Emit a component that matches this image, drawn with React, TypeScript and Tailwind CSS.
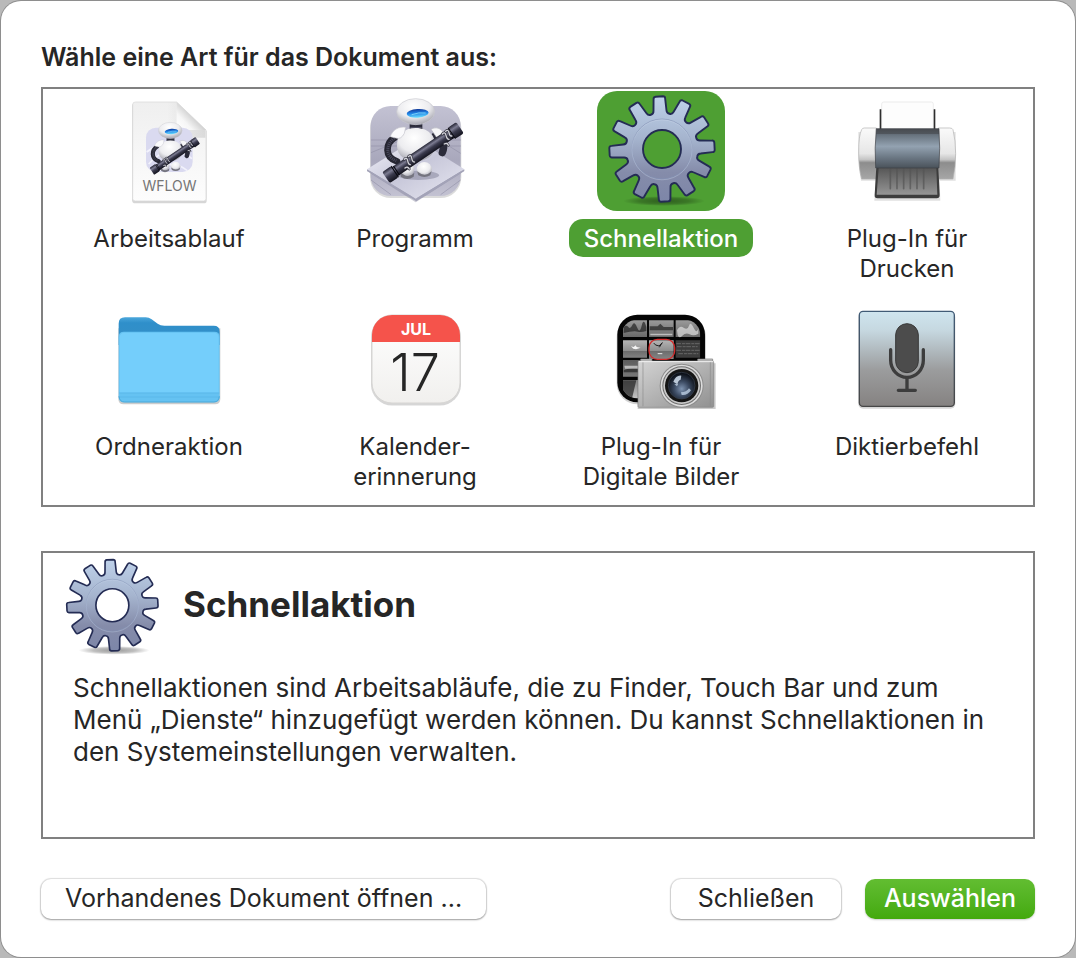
import type { ReactNode } from "react";

function gearPath(cx: number, cy: number) {
  const polar = (r: number, deg: number) => {
    const a = ((deg - 90) * Math.PI) / 180;
    return `${(cx + r * Math.cos(a)).toFixed(2)} ${(cy + r * Math.sin(a)).toFixed(2)}`;
  };
  let d = "";
  for (let i = 0; i < 12; i++) {
    const t = -3 + i * 30;
    d += `${i === 0 ? "M" : "L"}${polar(39, t - 9.6)}`;
    d += `L${polar(50.5, t - 6.6)}Q${polar(52.7, t - 6.4)} ${polar(52.7, t - 4)}`;
    d += `L${polar(52.7, t + 4)}Q${polar(52.7, t + 6.4)} ${polar(50.5, t + 6.6)}`;
    d += `L${polar(39, t + 9.6)}Q${polar(36, t + 10.5)} ${polar(36, t + 15)}`;
    d += `Q${polar(36, t + 19.5)} ${polar(39, t + 20.4)}`;
  }
  return d + "Z";
}

const GEAR = gearPath(65, 58);

function Gear({ id, className }: { id: string; className: string }) {
  return (
    <svg viewBox="0 0 128 120" className={className} aria-hidden="true">
      <defs>
        <linearGradient id={`${id}-body`} x1="0" y1="0" x2="0" y2="1">
          <stop offset="0" stopColor="#bfd2ea" />
          <stop offset=".4" stopColor="#a5b4ce" />
          <stop offset=".72" stopColor="#858caa" />
          <stop offset="1" stopColor="#7d86a8" />
        </linearGradient>
        <radialGradient id={`${id}-shadow`}>
          <stop offset="0" stopColor="#000" stopOpacity=".4" />
          <stop offset=".6" stopColor="#000" stopOpacity=".25" />
          <stop offset="1" stopColor="#000" stopOpacity="0" />
        </radialGradient>
      </defs>
      <ellipse cx="67" cy="110" rx="41" ry="5" fill={`url(#${id}-shadow)`} />
      <path
        d={`${GEAR}M84 58a19 19 0 1 0-38 0a19 19 0 1 0 38 0Z`}
        fill={`url(#${id}-body)`}
        fillRule="evenodd"
        stroke="#242c54"
        strokeWidth="1.9"
        strokeLinejoin="round"
      />
      <circle cx="65" cy="58" r="30" fill="none" stroke="#8292b5" strokeOpacity=".65" strokeWidth="1" />
      <circle cx="65" cy="58.8" r="30" fill="none" stroke="#d5e0f0" strokeOpacity=".4" strokeWidth=".8" />
    </svg>
  );
}

function Icon({ children }: { children: ReactNode }) {
  return (
    <svg viewBox="0 0 128 120" className="h-[120px] w-32" aria-hidden="true">
      {children}
    </svg>
  );
}

function Robot({ id }: { id: string }) {
  return (
    <g>
      <defs>
        <radialGradient id={`${id}-white`} cx=".45" cy=".3" r=".75">
          <stop offset="0" stopColor="#fff" />
          <stop offset=".55" stopColor="#ececef" />
          <stop offset="1" stopColor="#9b9ba6" />
        </radialGradient>
        <linearGradient id={`${id}-eye`} x1="0" y1="0" x2="0" y2="1">
          <stop offset="0" stopColor="#123a9a" />
          <stop offset=".45" stopColor="#1f80e4" />
          <stop offset="1" stopColor="#6ce0ff" />
        </linearGradient>
        <linearGradient id={`${id}-tube`} x1="0" y1="0" x2="0" y2="1">
          <stop offset="0" stopColor="#262636" />
          <stop offset=".28" stopColor="#7c7c92" />
          <stop offset=".55" stopColor="#3a3a4d" />
          <stop offset="1" stopColor="#14141f" />
        </linearGradient>
      </defs>
      <path d="M120 142C90 160 88 202 126 214" fill="none" stroke="#262632" strokeWidth="20" strokeLinecap="round" />
      <path d="M118 144C92 162 90 200 124 212" fill="none" stroke="#4b4b5e" strokeWidth="9" strokeDasharray="3 3" />
      <path d="M240 138C262 150 272 165 262 188" fill="none" stroke="#2b2b3a" strokeWidth="22" strokeLinecap="round" />
      <path d="M164 94h38v28h-38z" fill="#262633" />
      <path d="M166 104h34M166 112h34" stroke="#5c5c70" strokeWidth="3" />
      <ellipse cx="156" cy="236" rx="22" ry="25" fill={`url(#${id}-white)`} />
      <ellipse cx="208" cy="238" rx="23" ry="22" fill={`url(#${id}-white)`} />
      <path d="M134 244q24 26 44 4l-2 12q-20 14-38 0zM186 244q24 20 44 0l-4 12q-18 10-36 0z" fill="#74747f" />
      <path d="M182 114C224 114 244 142 240 172C236 198 212 214 182 214C150 214 128 196 126 170C124 136 146 114 182 114Z" fill={`url(#${id}-white)`} />
      <path d="M106 140C112 120 132 108 152 112L148 130Q138 150 122 144Z" fill="#fafafc" stroke="#c4c4cc" strokeWidth="2" />
      <path d="M228 118C244 108 260 116 268 132Q262 146 246 144Z" fill="#f6f6f8" stroke="#b4b4be" strokeWidth="2" />
      <ellipse cx="182" cy="65" rx="57" ry="39" fill={`url(#${id}-white)`} stroke="#c8c8cf" strokeWidth="2" />
      <ellipse cx="188" cy="70" rx="33" ry="13" fill={`url(#${id}-eye)`} transform="rotate(-4 188 70)" />
      <path d="M170 74q22-8 42-5" fill="none" stroke="#9aecff" strokeWidth="3" opacity=".7" />
      <g transform="translate(204 188) rotate(-34)">
        <rect x="-128" y="-16" width="258" height="32" rx="4" fill={`url(#${id}-tube)`} />
        <rect x="-134" y="-20" width="32" height="40" rx="5" fill={`url(#${id}-tube)`} />
        <rect x="104" y="-20" width="30" height="40" rx="5" fill={`url(#${id}-tube)`} />
        <path d="M-96-16v32M98-16v32M-102-20v40M104-20v40" stroke="#08080f" strokeWidth="3" />
      </g>
      <path d="M148 208q8-8 10 4t8 12M160 200q8-8 10 4t8 12M150 234q8-6 13 3" fill="none" stroke="#34343f" strokeWidth="8" strokeLinecap="round" />
      <path d="M148 208q8-8 10 4t8 12M160 200q8-8 10 4t8 12M150 234q8-6 13 3" fill="none" stroke="#d4d4dc" strokeWidth="4" strokeLinecap="round" />
      <path d="M262 132q8-8 11 4t9 12M272 124q8-7 10 4t8 10M268 162q9-5 12 4" fill="none" stroke="#34343f" strokeWidth="8" strokeLinecap="round" />
      <path d="M262 132q8-8 11 4t9 12M272 124q8-7 10 4t8 10M268 162q9-5 12 4" fill="none" stroke="#d4d4dc" strokeWidth="4" strokeLinecap="round" />
    </g>
  );
}

function WorkflowIcon() {
  return (
    <Icon>
      <defs>
        <linearGradient id="wf-page" x1="0" y1="0" x2="0" y2="1">
          <stop offset="0" stopColor="#efefef" />
          <stop offset="1" stopColor="#fdfdfd" />
        </linearGradient>
        <linearGradient id="wf-fold" gradientUnits="userSpaceOnUse" x1="172" y1="110" x2="216" y2="68">
          <stop offset="0" stopColor="#fff" />
          <stop offset=".5" stopColor="#f6f6f6" />
          <stop offset="1" stopColor="#cfcfcf" />
        </linearGradient>
        <linearGradient id="wf-shade" x1="0" y1="0" x2="1" y2="0">
          <stop offset="0" stopColor="#aaa" stopOpacity="0" />
          <stop offset="1" stopColor="#aaa" />
        </linearGradient>
      </defs>
      <g transform="translate(15 1) scale(.3333)">
        <path d="M46 34H170L260 117V326Q260 334 252 334H46Q36 334 36 323V42Q36 34 46 34Z" fill="#000" opacity=".16" />
        <path d="M46 30H170L258 114V320Q258 327 251 327H46Q38 327 38 319V38Q38 30 46 30Z" fill="url(#wf-page)" stroke="#d8d8d8" strokeWidth="2" />
        <path d="M142 31h28v82h86v24H186Q150 132 142 104Z" fill="url(#wf-shade)" opacity=".35" />
        <path d="M170 30L258 114H182Q170 114 170 102Z" fill="url(#wf-fold)" />
        <rect x="78" y="107" width="140" height="133" rx="30" fill="#dadaf0" />
        <path d="M80 180q60-46 136-8M86 216q60-70 130-16M120 238q30-40 82-2" fill="none" stroke="#f2f2fc" strokeWidth="5" />
        <g transform="translate(38 75) scale(.62)">
          <Robot id="wf-robot" />
        </g>
      </g>
      <text x="64.5" y="100" textAnchor="middle" fontSize="14" fill="#757575" className="font-['Inter',sans-serif]">
        WFLOW
      </text>
    </Icon>
  );
}

function AutomatorIcon() {
  return (
    <Icon>
      <defs>
        <linearGradient id="au-tile" x1="0" y1="0" x2="0" y2="1">
          <stop offset="0" stopColor="#c3c2d3" />
          <stop offset=".6" stopColor="#a9a8bc" />
          <stop offset="1" stopColor="#c3c2d2" />
        </linearGradient>
        <linearGradient id="au-base" x1="0" y1="0" x2="1" y2="1">
          <stop offset="0" stopColor="#f4f4fb" />
          <stop offset=".5" stopColor="#c8c8da" />
          <stop offset="1" stopColor="#e8e8f2" />
        </linearGradient>
      </defs>
      <g transform="translate(4 -1) scale(.3333)">
        <rect x="45" y="52" width="274" height="272" rx="62" fill="#000" opacity=".14" />
        <rect x="47" y="48" width="270" height="270" rx="60" fill="url(#au-tile)" />
        <path d="M48 150h270M48 168h270M48 188L140 150M317 190l-80-50M48 270l60 44M317 270l-60 44" stroke="#8f8ea5" strokeWidth="3" opacity=".55" />
        <path d="M36 243L182 337L328 243L182 154Z" fill="#70708a" opacity=".35" />
        <path d="M36 238L182 146L328 238L182 326Z" fill="url(#au-base)" />
        <path d="M36 238L182 326L328 238V243L184 334L36 243Z" fill="#a3a3b8" />
        <ellipse cx="190" cy="256" rx="62" ry="14" fill="#6b6b84" opacity=".4" />
        <Robot id="au-robot" />
      </g>
    </Icon>
  );
}

function PrinterIcon() {
  return (
    <Icon>
      <defs>
        <linearGradient id="pr-side" x1="0" y1="0" x2="0" y2="1">
          <stop offset="0" stopColor="#fafafa" />
          <stop offset=".5" stopColor="#e6e6e6" />
          <stop offset=".62" stopColor="#c4c4c4" />
          <stop offset=".68" stopColor="#8d8d8d" />
          <stop offset="1" stopColor="#a6a6a6" />
        </linearGradient>
        <linearGradient id="pr-body" x1="0" y1="0" x2="0" y2="1">
          <stop offset="0" stopColor="#484b50" />
          <stop offset=".13" stopColor="#50565d" />
          <stop offset=".15" stopColor="#66717c" />
          <stop offset=".45" stopColor="#93a2b1" />
          <stop offset=".75" stopColor="#697581" />
          <stop offset="1" stopColor="#4a525a" />
        </linearGradient>
        <linearGradient id="pr-tray" x1="0" y1="0" x2="0" y2="1">
          <stop offset="0" stopColor="#575757" />
          <stop offset="1" stopColor="#959595" />
        </linearGradient>
      </defs>
      <g transform="translate(2 1) scale(.3333)">
        <path d="M40 120h292v146H284l2 60H88l4-60H48q-8-40-8-80z" fill="#000" opacity=".12" />
        <path d="M104 52h12v60h-12zM259 52h12v60h-12z" fill="#2e2e2e" />
        <path d="M110 36Q110 30 116 30H259Q265 30 265 36V112H110Z" fill="#fdfdfd" stroke="#e4e4e4" strokeWidth="2" />
        <path d="M58 108H94V261H50Q41 230 41 180T50 113Q52 108 58 108ZM280 108H314Q322 108 324 113Q332 145 332 185T324 261H280Z" fill="url(#pr-side)" stroke="#b0b0b0" strokeWidth="2" />
        <path d="M94 222H280L284 309Q284 319 275 319H98Q88 319 89 309Z" fill="#3c3c3c" />
        <path d="M101 228H274L277 308H95Z" fill="url(#pr-tray)" />
        <path d="M136 230v60M156 230v60M176 230v60M196 230v60M216 230v60M236 230v60" stroke="#555" strokeWidth="5" strokeLinecap="round" opacity=".7" />
        <path d="M94 110H282Q286 168 282 228H92Q88 168 94 110Z" fill="url(#pr-body)" stroke="#3c4046" strokeWidth="2" />
      </g>
    </Icon>
  );
}

function FolderIcon() {
  return (
    <Icon>
      <defs>
        <linearGradient id="fo-back" x1="0" y1="0" x2="0" y2="1">
          <stop offset="0" stopColor="#4aa6db" />
          <stop offset=".2" stopColor="#2f8fca" />
          <stop offset="1" stopColor="#368fc5" />
        </linearGradient>
      </defs>
      <g transform="translate(0 6) scale(.3333)">
        <path d="M40 70H346V282Q346 298 330 298H56Q40 298 40 282Z" fill="#000" opacity=".2" />
        <path d="M41 56Q41 37 60 37H122Q132 37 140 43L158 56Q166 62 178 62H326Q344 62 344 80V120H41Z" fill="url(#fo-back)" />
        <path d="M41 96Q41 80 57 80H328Q344 80 344 96V276Q344 292 328 292H57Q41 292 41 276Z" fill="#65c2f2" />
        <path d="M44 97Q44 83 58 83H327Q341 83 341 97V263H44Z" fill="#74cefb" />
        <path d="M42 264H343M42 276H343" stroke="#5bb9ea" strokeWidth="3" />
        <path d="M42 274Q44 291 58 291H327Q341 291 343 274" fill="none" stroke="#4aa8d8" strokeWidth="3" />
      </g>
    </Icon>
  );
}

function CalendarIcon() {
  return (
    <Icon>
      <defs>
        <linearGradient id="ca-page" x1="0" y1="0" x2="0" y2="1">
          <stop offset="0" stopColor="#fff" />
          <stop offset="1" stopColor="#f1f0ee" />
        </linearGradient>
      </defs>
      <rect x="20" y="17.5" width="90" height="89" rx="21" fill="#000" opacity=".16" />
      <rect x="21" y="16" width="88" height="88" rx="20" fill="url(#ca-page)" stroke="#d6d5d3" strokeWidth="1" />
      <path d="M21 43V36A20 20 0 0 1 41 16H89A20 20 0 0 1 109 36V43Z" fill="#f5534b" />
      <text x="65" y="36" textAnchor="middle" fontSize="16" fontWeight="700" fill="#fff" className="font-['Inter',sans-serif]">
        JUL
      </text>
      <text x="64" y="92" textAnchor="middle" fontSize="52" fontWeight="300" fill="#262626" className="font-['Inter',sans-serif]">
        17
      </text>
    </Icon>
  );
}

function CameraIcon() {
  return (
    <Icon>
      <defs>
        <linearGradient id="cm-photo" x1="0" y1="0" x2="0" y2="1">
          <stop offset="0" stopColor="#9a9a9a" />
          <stop offset=".35" stopColor="#4a4a4a" />
          <stop offset=".7" stopColor="#777" />
          <stop offset="1" stopColor="#c9c9c9" />
        </linearGradient>
        <linearGradient id="cm-sky" x1="0" y1="0" x2="0" y2="1">
          <stop offset="0" stopColor="#b4b4b4" />
          <stop offset=".55" stopColor="#8f8f8f" />
          <stop offset=".58" stopColor="#6c6c6c" />
          <stop offset="1" stopColor="#858585" />
        </linearGradient>
        <linearGradient id="cm-body" x1="0" y1="0" x2="1" y2="1">
          <stop offset="0" stopColor="#d4d4d4" />
          <stop offset=".5" stopColor="#b2b2b2" />
          <stop offset="1" stopColor="#919191" />
        </linearGradient>
        <radialGradient id="cm-lens" cx=".5" cy=".62" r=".6">
          <stop offset="0" stopColor="#7e93b0" />
          <stop offset=".45" stopColor="#3d4c64" />
          <stop offset="1" stopColor="#070a10" />
        </radialGradient>
        <clipPath id="cm-clip">
          <rect x="50" y="44" width="236" height="236" rx="46" />
        </clipPath>
      </defs>
      <g transform="translate(8 6) scale(.3333)">
        <rect x="35" y="34" width="268" height="264" rx="62" fill="#000" opacity=".18" />
        <rect x="37" y="29" width="263" height="263" rx="60" fill="#050505" />
        <g clipPath="url(#cm-clip)">
          <path d="M54 46h72v50H54zM132 46h74v50h-74zM212 46h74v50h-74zM54 165h72v50H54zM54 225h72v60H54z" fill="url(#cm-photo)" />
          <path d="M54 106h72v52H54zM132 106h74v56h-74z" fill="url(#cm-sky)" />
          <path d="M212 106h74v52h-74z" fill="#3d3d3d" />
          <path d="M56 66q8-8 14 0t12-6t14 7t14-5t14 4v12q-14 5-26 2t-42 4zM134 64h24l8-8 10 10h28v10h-70zM56 196q30-16 66 0v6H56zM54 226h40l-12 50H54z" fill="#2a2a2a" opacity=".75" />
          <path d="M216 76q8-16 20-8t16-6t14 6t14 2v16q-14 8-26 2t-22 4t-14-2zM58 182h40l20 9H60zM136 86h66v5h-66z" fill="#dedede" opacity=".7" />
          <path d="M214 116h70M216 125h62M214 136h70M220 146h60" stroke="#777" strokeWidth="3" strokeDasharray="14 3 9 2" opacity=".7" />
          <path d="M78 124l8 2 6-5 3 5 12 2-14 5-8-2z" fill="#f5f5f5" />
          <path d="M152 120l10 3 10-10-9 14M146 114l7 7" fill="none" stroke="#222" strokeWidth="3" />
          <path d="M158 146h14" stroke="#eee" strokeWidth="3" />
        </g>
        <rect x="132" y="103" width="77" height="60" rx="25" fill="none" stroke="#d52b2b" strokeWidth="4" />
        <path d="M98 175H332V312H98Z" fill="#000" opacity=".2" />
        <path d="M107 162h34v9h-34zM278 162h45v9h-45z" fill="#c9c9c9" stroke="#777" strokeWidth="2" />
        <rect x="99" y="168" width="227" height="139" rx="3" fill="url(#cm-body)" stroke="#858585" strokeWidth="2" />
        <path d="M101 170H325" stroke="#f4f4f4" strokeWidth="3" />
        <path d="M114 172v132M316 172v132" stroke="#8d8d8d" strokeWidth="2" />
        <circle cx="230" cy="242" r="66" fill="#8b8b8b" />
        <circle cx="230" cy="242" r="63" fill="#dcdcdc" />
        <circle cx="230" cy="242" r="58" fill="#6f6f6f" />
        <circle cx="230" cy="242" r="55" fill="#c9c9c9" />
        <circle cx="230" cy="242" r="50" fill="#151515" />
        <circle cx="230" cy="242" r="40" fill="url(#cm-lens)" stroke="#3b4453" strokeWidth="2" />
        <path d="M205 230q8-20 24-18l-2 12q-8 2-10 14z" fill="#d3e0ef" opacity=".85" />
        <path d="M208 238l12-2-4 8zM228 262q16 0 24-12l6 6q-10 16-28 14z" fill="#c4d6ea" opacity=".75" />
      </g>
    </Icon>
  );
}

function MicrophoneIcon() {
  return (
    <Icon>
      <defs>
        <linearGradient id="mi-tile" x1="0" y1="0" x2="0" y2="1">
          <stop offset="0" stopColor="#cfe5ef" />
          <stop offset=".2" stopColor="#c6d8e0" />
          <stop offset=".62" stopColor="#9b9c9d" />
          <stop offset="1" stopColor="#858281" />
        </linearGradient>
        <linearGradient id="mi-edge" x1="0" y1="0" x2="0" y2="1">
          <stop offset="0" stopColor="#415b76" />
          <stop offset="1" stopColor="#474747" />
        </linearGradient>
      </defs>
      <g transform="translate(2 1) scale(.3333)">
        <rect x="40" y="38" width="291" height="288" rx="14" fill="#000" opacity=".16" />
        <rect x="43" y="34" width="285" height="285" rx="11" fill="url(#mi-tile)" stroke="url(#mi-edge)" strokeWidth="4" />
        <rect x="152" y="71" width="68" height="147" rx="34" fill="#4c4c4c" stroke="#383838" strokeWidth="3" />
        <path d="M137 149V181A49 51 0 0 0 235 181V149" fill="none" stroke="#3d3d3d" strokeWidth="10" strokeLinecap="round" />
        <path d="M186 234V268M160 271H211" stroke="#3d3d3d" strokeWidth="10" strokeLinecap="round" />
      </g>
    </Icon>
  );
}

const documentTypes: { lines: string[]; icon: ReactNode; selected?: boolean }[] = [
  { lines: ["Arbeitsablauf"], icon: <WorkflowIcon /> },
  { lines: ["Programm"], icon: <AutomatorIcon /> },
  { lines: ["Schnellaktion"], icon: <Gear id="tile-gear" className="h-[120px] w-32" />, selected: true },
  { lines: ["Plug-In für", "Drucken"], icon: <PrinterIcon /> },
  { lines: ["Ordneraktion"], icon: <FolderIcon /> },
  { lines: ["Kalender-", "erinnerung"], icon: <CalendarIcon /> },
  { lines: ["Plug-In für", "Digitale Bilder"], icon: <CameraIcon /> },
  { lines: ["Diktierbefehl"], icon: <MicrophoneIcon /> },
];

export default function App() {
  return (
    <div className="flex min-h-screen bg-[#b9b9b9] p-px font-['Inter','Liberation_Sans',sans-serif] text-[#262626]">
      <main className="flex-1 rounded-[20px] bg-white px-10 pt-10 pb-9 shadow-[0_0_0_1px_#8e8e8e]">
        <h1 className="mb-3.5 text-[25px] leading-8 font-semibold">Wähle eine Art für das Dokument aus:</h1>

        <div className="grid grid-cols-4 gap-y-3 border-2 border-[#808080] px-[3px] pt-0.5 pb-2.5">
          {documentTypes.map((type) => (
            <button
              key={type.lines.join("")}
              type="button"
              aria-pressed={Boolean(type.selected)}
              className="flex min-h-[196px] flex-col items-center gap-2"
            >
              <span className={type.selected ? "rounded-[20px] bg-[#4e9f33]" : "rounded-[20px]"}>{type.icon}</span>
              <span
                className={
                  type.selected
                    ? "rounded-[14px] bg-[#4e9f33] px-[15px] pt-[5px] pb-[3px] text-2xl leading-[30px] font-medium text-white"
                    : "px-[15px] pt-[5px] pb-[3px] text-2xl leading-[30px]"
                }
              >
                {type.lines.map((line) => (
                  <span key={line} className="block">
                    {line}
                  </span>
                ))}
              </span>
            </button>
          ))}
        </div>

        <section className="mt-11 min-h-72 border-2 border-[#808080] pt-0.5 pr-7 pl-[13px]">
          <div className="flex items-center gap-4">
            <Gear id="detail-gear" className="h-[104px] w-[111px]" />
            <h2 className="pb-1.5 text-[35px] leading-10 font-bold">Schnellaktion</h2>
          </div>
          <p className="mt-[13px] ml-[17px] text-[26px] leading-8">
            Schnellaktionen sind Arbeitsabläufe, die zu Finder, Touch Bar und zum Menü „Dienste“ hinzugefügt werden
            können. Du kannst Schnellaktionen in den Systemeinstellungen verwalten.
          </p>
        </section>

        <div className="mt-10 flex gap-6 text-[25px] leading-8">
          <button
            type="button"
            className="mr-auto h-10 rounded-[10px] bg-white px-6 pb-0.5 shadow-[0_0_1px_1px_rgba(0,0,0,0.12),0_1px_2px_rgba(0,0,0,0.3)]"
          >
            Vorhandenes Dokument öffnen ...
          </button>
          <button
            type="button"
            className="h-10 w-[170px] rounded-[10px] bg-white pb-0.5 shadow-[0_0_1px_1px_rgba(0,0,0,0.12),0_1px_2px_rgba(0,0,0,0.3)]"
          >
            Schließen
          </button>
          <button
            type="button"
            className="h-10 w-[170px] rounded-[10px] bg-linear-to-b from-[#62bd31] to-[#43a90b] pb-0.5 font-medium text-white shadow-[0_1px_2px_rgba(0,0,0,0.2)]"
          >
            Auswählen
          </button>
        </div>
      </main>
    </div>
  );
}
